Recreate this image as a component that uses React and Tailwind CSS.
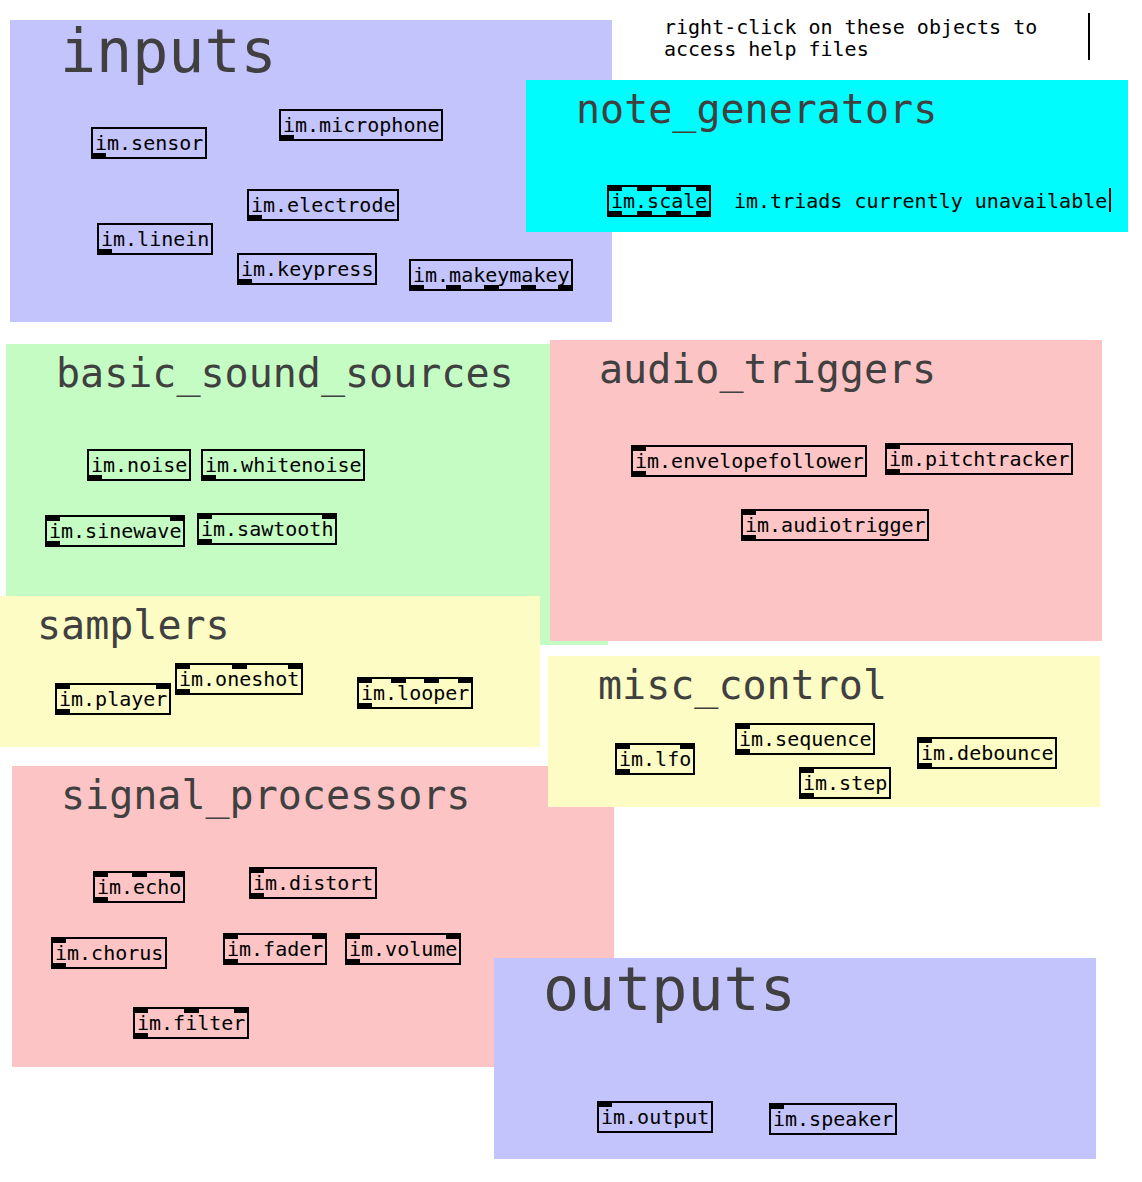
import React from "react";

// Pd-style patch: coloured canvases with object boxes placed freely on them
const canvases = [
  { label: "inputs", x: 10, y: 20, w: 602, h: 302, bg: "bg-[#c4c4fc]", big: true, lx: 50, ly: 1 },
  { label: "note_generators", x: 526, y: 80, w: 602, h: 152, bg: "bg-[#00fcfc]", lx: 50, ly: 9 },
  { label: "basic_sound_sources", x: 6, y: 344, w: 602, h: 301, bg: "bg-[#c4fcc4]", lx: 50, ly: 9 },
  { label: "audio_triggers", x: 550, y: 340, w: 552, h: 301, bg: "bg-[#fcc4c4]", lx: 49, ly: 9 },
  { label: "samplers", x: 0, y: 596, w: 540, h: 151, bg: "bg-[#fcfcc4]", lx: 37, ly: 9 },
  { label: "signal_processors", x: 12, y: 766, w: 602, h: 301, bg: "bg-[#fcc4c4]", lx: 49, ly: 9 },
  { label: "misc_control", x: 548, y: 656, w: 552, h: 151, bg: "bg-[#fcfcc4]", lx: 50, ly: 9 },
  { label: "outputs", x: 494, y: 958, w: 602, h: 201, bg: "bg-[#c4c4fc]", big: true, lx: 49, ly: 1 },
];

// [name, x, y, inlets, outlets]
const boxes = [
  ["im.sensor", 91, 127, 0, 1],
  ["im.microphone", 279, 109, 0, 1],
  ["im.electrode", 247, 189, 0, 1],
  ["im.linein", 97, 223, 0, 1],
  ["im.keypress", 237, 253, 0, 1],
  ["im.makeymakey", 409, 259, 0, 5],
  ["im.scale", 607, 185, 4, 4],
  ["im.noise", 87, 449, 0, 1],
  ["im.whitenoise", 201, 449, 0, 1],
  ["im.sinewave", 45, 515, 2, 1],
  ["im.sawtooth", 197, 513, 2, 1],
  ["im.player", 55, 683, 2, 1],
  ["im.oneshot", 175, 663, 3, 1],
  ["im.looper", 357, 677, 4, 1],
  ["im.envelopefollower", 631, 445, 1, 1],
  ["im.pitchtracker", 885, 443, 1, 1],
  ["im.audiotrigger", 741, 509, 1, 1],
  ["im.lfo", 615, 743, 2, 1],
  ["im.sequence", 735, 723, 1, 1],
  ["im.step", 799, 767, 1, 1],
  ["im.debounce", 917, 737, 1, 1],
  ["im.echo", 93, 871, 3, 1],
  ["im.distort", 249, 867, 1, 1],
  ["im.chorus", 51, 937, 1, 1],
  ["im.fader", 223, 933, 2, 1],
  ["im.volume", 345, 933, 2, 1],
  ["im.filter", 133, 1007, 3, 1],
  ["im.output", 597, 1101, 1, 0],
  ["im.speaker", 769, 1103, 1, 0],
];

const TAB = 15;

function tabPositions(count, width) {
  if (count === 0) return [];
  if (count === 1) return [0];
  const step = (width - TAB) / (count - 1);
  return Array.from({ length: count }, (_, i) => Math.round(i * step));
}

function PdBox({ name, x, y, inlets, outlets }) {
  const width = name.length * 12 + 8;
  return (
    <div
      className="absolute h-[32px] box-border border-2 border-black pl-[2px] text-[20px] leading-[28px] text-black whitespace-nowrap"
      style={{ left: x, top: y, width }}
    >
      {tabPositions(inlets, width).map((p, i) => (
        <div key={"i" + i} className="absolute -top-[2px] h-[6px] w-[15px] bg-black" style={{ left: p - 2 }} />
      ))}
      {tabPositions(outlets, width).map((p, i) => (
        <div key={"o" + i} className="absolute -bottom-[2px] h-[6px] w-[15px] bg-black" style={{ left: p - 2 }} />
      ))}
      {name}
    </div>
  );
}

export default function App() {
  return (
    <div className="relative w-[1142px] h-[1182px] overflow-hidden bg-white font-['DejaVu_Sans_Mono',monospace]">
      {canvases.map((c) => (
        <div
          key={c.label}
          className={"absolute " + c.bg}
          style={{ left: c.x, top: c.y, width: c.w, height: c.h }}
        >
          <div
            className={
              "absolute whitespace-nowrap text-[#404040] " +
              (c.big ? "text-[60px] leading-[60px]" : "text-[40px] leading-[40px]")
            }
            style={{ left: c.lx, top: c.ly }}
          >
            {c.label}
          </div>
        </div>
      ))}

      {/* comments */}
      <div className="absolute left-[664px] top-[16px] text-[20px] leading-[22px] text-black whitespace-nowrap">
        <div>right-click on these objects to</div>
        <div>access help files</div>
      </div>
      <div className="absolute left-[1088px] top-[13px] h-[47px] w-[2px] bg-black" />

      <div className="absolute left-[734px] top-[190px] text-[20px] leading-[22px] text-black whitespace-nowrap">
        im.triads currently unavailable
      </div>
      <div className="absolute left-[1109px] top-[188px] h-[24px] w-[2px] bg-black" />

      {boxes.map(([name, x, y, inlets, outlets]) => (
        <PdBox key={name} name={name} x={x} y={y} inlets={inlets} outlets={outlets} />
      ))}
    </div>
  );
}
